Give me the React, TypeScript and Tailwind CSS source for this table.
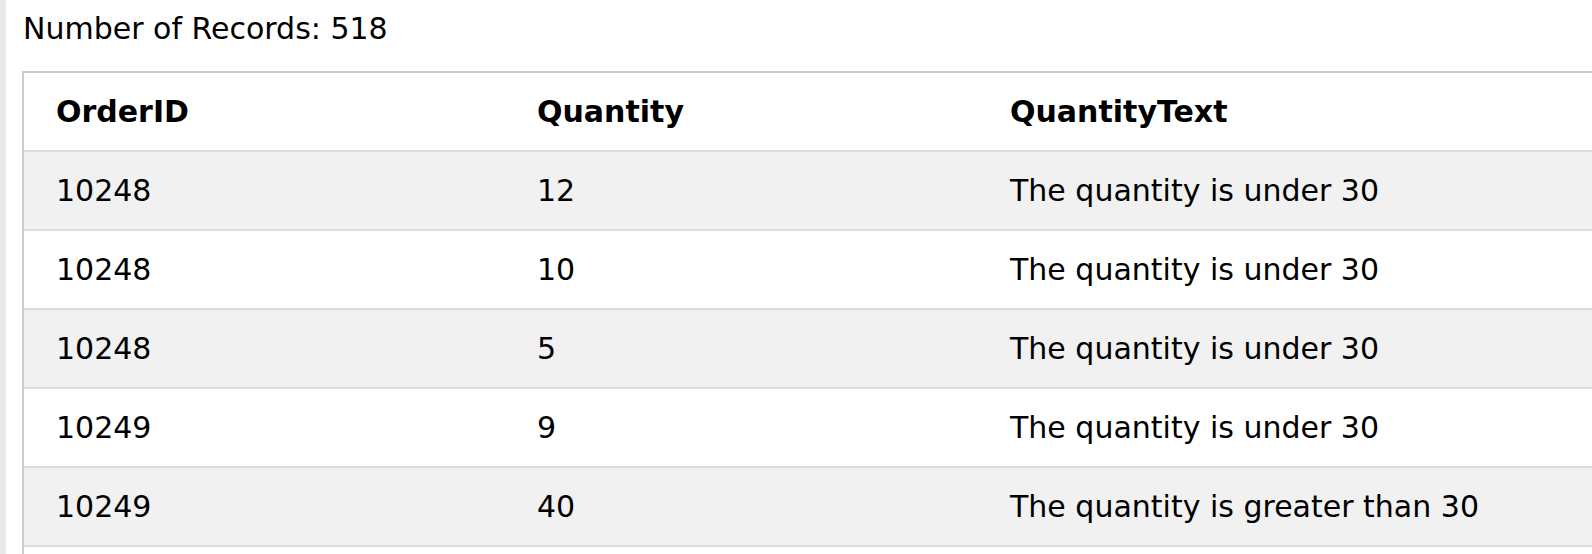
const rows = [
  { id: "10248", qty: "12", text: "The quantity is under 30" },
  { id: "10248", qty: "10", text: "The quantity is under 30" },
  { id: "10248", qty: "5", text: "The quantity is under 30" },
  { id: "10249", qty: "9", text: "The quantity is under 30" },
  { id: "10249", qty: "40", text: "The quantity is greater than 30" },
];

export default function App() {
  return (
    <div className="flex w-[1592px] h-[554px] overflow-hidden bg-white text-black text-[30px] font-['DejaVu_Sans',Verdana,sans-serif]">
      <div className="w-[6px] shrink-0 bg-[#e7e9eb]" />
      <div className="flex-1 pl-[16px] pt-[6px]">
        <div className="leading-[45px] pl-px">Number of Records: 518</div>
        <div className="mt-[20px] w-[1700px] border-2 border-[#cccccc]">
          <div className="grid grid-cols-[481px_473px_1fr] h-[77px] items-center font-bold bg-white">
            <div className="pl-[32px]">OrderID</div>
            <div className="pl-[32px]">Quantity</div>
            <div className="pl-[32px]">QuantityText</div>
          </div>
          {rows.map((r, i) => (
            <div
              key={i}
              className={`grid grid-cols-[481px_473px_1fr] h-[79px] items-center border-t-2 border-[#dddddd] ${i % 2 === 0 ? "bg-[#f1f1f1]" : "bg-white"}`}
            >
              <div className="pl-[32px]">{r.id}</div>
              <div className="pl-[32px]">{r.qty}</div>
              <div className="pl-[32px]">{r.text}</div>
            </div>
          ))}
          {/* next row starts below the fold */}
          <div className="h-[79px] border-t-2 border-[#dddddd] bg-white" />
        </div>
      </div>
    </div>
  );
}
